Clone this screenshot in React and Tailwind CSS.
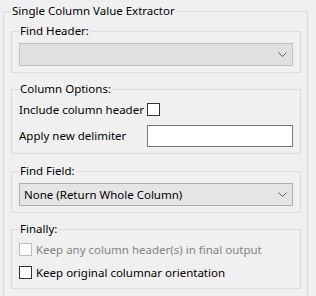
import React from "react";

const Chevron = () => (
  <svg width="10" height="6" viewBox="0 0 10 6" className="ml-auto mr-[4px] shrink-0">
    <polyline points="0.5,0.5 4.5,4.5 8.5,0.5" fill="none" stroke="#5c5c5c" strokeWidth="1" />
  </svg>
);

const Check = ({ disabled }) => (
  <div
    className={`w-[13px] h-[13px] shrink-0 border bg-white ${
      disabled ? "border-[#bcbcbc]" : "border-[#333333]"
    }`}
  />
);

const Group = ({ title, className, children }) => (
  <fieldset className={`border border-[#dcdcdc] pl-[7px] pr-[7px] ${className}`}>
    <legend className="px-[1px] leading-4 whitespace-nowrap">{title}</legend>
    {children}
  </fieldset>
);

export default function App() {
  return (
    <div
      className="w-[316px] h-[296px] overflow-hidden bg-[#f0f0f0] pl-[3px] pt-[3px] text-[11.5px] text-black whitespace-nowrap"
      style={{ fontFamily: '"Segoe UI", "Noto Sans", sans-serif' }}
    >
      <fieldset className="border border-[#dcdcdc] w-[305px] h-[320px] pl-[7px] pr-[6px]">
        <legend className="px-[1px] leading-4">Single Column Value Extractor</legend>

        {/* Find Header */}
        <Group title="Find Header:" className="mt-[4px] pt-[4px] pb-[6px]">
          <div className="h-[23px] border border-[#bfbfbf] bg-[#e1e1e1] flex items-center">
            <Chevron />
          </div>
        </Group>

        {/* Column Options */}
        <Group title="Column Options:" className="mt-[8px] pt-[6px] pb-[6px]">
          <div className="flex items-center h-[13px]">
            <span className="w-[128px] shrink-0 leading-4">Include column header</span>
            <Check />
          </div>
          <div className="flex items-center mt-[9px]">
            <span className="w-[128px] shrink-0 leading-4">Apply new delimiter</span>
            <div className="h-[22px] flex-1 border border-[#7a7a7a] bg-white" />
          </div>
        </Group>

        {/* Find Field */}
        <Group title="Find Field:" className="mt-[9px] pt-[4px] pb-[6px]">
          <div className="h-[23px] border border-[#adadad] bg-[#e5e5e5] flex items-center pl-[4px]">
            <span className="leading-4">None (Return Whole Column)</span>
            <Chevron />
          </div>
        </Group>

        {/* Finally */}
        <Group title="Finally:" className="mt-[8px] pt-[6px] pb-[9px]">
          <div className="flex items-center h-[13px] gap-[4px]">
            <Check disabled />
            <span className="leading-4 text-[#838383]">Keep any column header(s) in final output</span>
          </div>
          <div className="flex items-center h-[13px] gap-[4px] mt-[10px]">
            <Check />
            <span className="leading-4">Keep original columnar orientation</span>
          </div>
        </Group>
      </fieldset>
    </div>
  );
}
